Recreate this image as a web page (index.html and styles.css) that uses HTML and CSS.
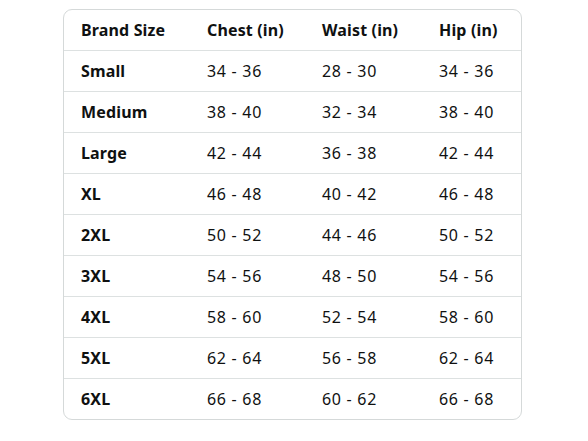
FILE: index.html
```html
<!DOCTYPE html>
<html>
<head>
<meta charset="utf-8">
<link rel="stylesheet" href="styles.css">
</head>
<body>
<div class="card">
  <div class="row head"><div>Brand Size</div><div>Chest (in)</div><div>Waist (in)</div><div>Hip (in)</div></div>
  <div class="row"><div class="size">Small</div><div>34 - 36</div><div>28 - 30</div><div>34 - 36</div></div>
  <div class="row"><div class="size">Medium</div><div>38 - 40</div><div>32 - 34</div><div>38 - 40</div></div>
  <div class="row"><div class="size">Large</div><div>42 - 44</div><div>36 - 38</div><div>42 - 44</div></div>
  <div class="row"><div class="size">XL</div><div>46 - 48</div><div>40 - 42</div><div>46 - 48</div></div>
  <div class="row"><div class="size">2XL</div><div>50 - 52</div><div>44 - 46</div><div>50 - 52</div></div>
  <div class="row"><div class="size">3XL</div><div>54 - 56</div><div>48 - 50</div><div>54 - 56</div></div>
  <div class="row"><div class="size">4XL</div><div>58 - 60</div><div>52 - 54</div><div>58 - 60</div></div>
  <div class="row"><div class="size">5XL</div><div>62 - 64</div><div>56 - 58</div><div>62 - 64</div></div>
  <div class="row"><div class="size">6XL</div><div>66 - 68</div><div>60 - 62</div><div>66 - 68</div></div>
</div>
</body>
</html>
```
FILE: styles.css
```css
html, body {
  margin: 0;
  padding: 0;
  background: #ffffff;
}
body {
  padding: 9px 0 0 63px;
  font-family: "Noto Sans", "Open Sans", sans-serif;
  color: #0f1111;
  font-size: 16px;
}
.card {
  width: 457px;
  border: 1px solid #d5d9d9;
  border-radius: 9px;
  box-sizing: content-box;
}
.row {
  display: grid;
  grid-template-columns: 126px 115px 117px 1fr;
  padding-left: 17px;
  height: 40px;
  align-items: center;
  border-bottom: 1px solid #dde1e1;
  letter-spacing: 0.7px;
}
.row:last-child {
  border-bottom: none;
}
.head div, .size {
  font-weight: 700;
  letter-spacing: 0.15px;
}
```
